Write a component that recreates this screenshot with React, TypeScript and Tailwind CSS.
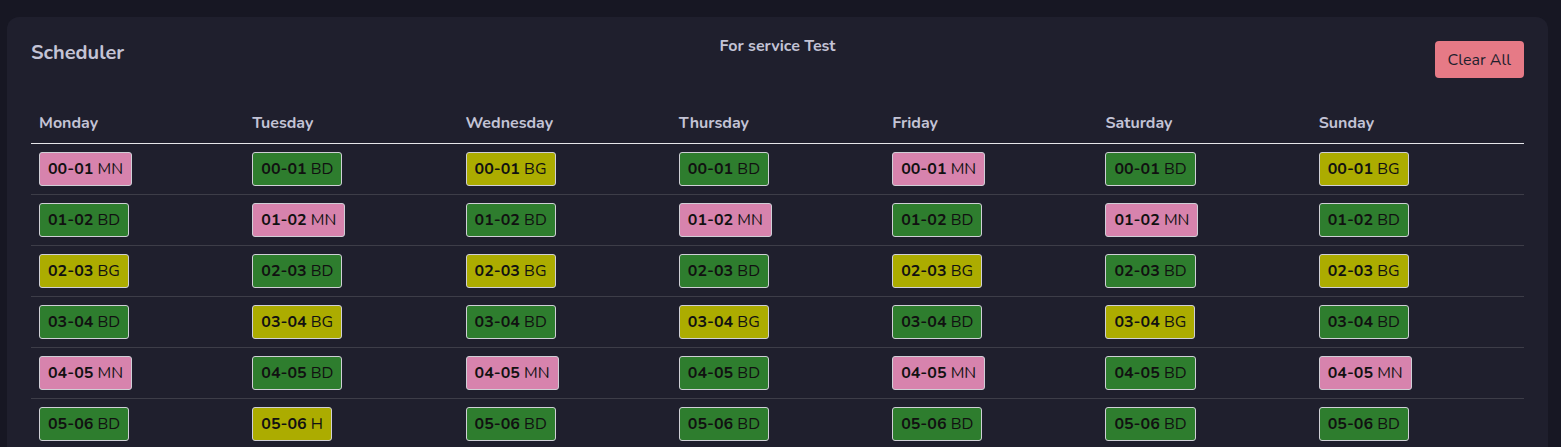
const days = ["Monday", "Tuesday", "Wednesday", "Thursday", "Friday", "Saturday", "Sunday"];

// one row per hour slot, one code per day
const slots: string[][] = [
  ["MN", "BD", "BG", "BD", "MN", "BD", "BG"],
  ["BD", "MN", "BD", "MN", "BD", "MN", "BD"],
  ["BG", "BD", "BG", "BD", "BG", "BD", "BG"],
  ["BD", "BG", "BD", "BG", "BD", "BG", "BD"],
  ["MN", "BD", "MN", "BD", "MN", "BD", "MN"],
  ["BD", "H", "BD", "BD", "BD", "BD", "BD"],
];

const chipColor: Record<string, string> = {
  MN: "bg-[#d783ad]",
  BD: "bg-[#2e7d2e]",
  BG: "bg-[#acac00]",
  H: "bg-[#acac00]",
};

const pad = (n: number) => String(n).padStart(2, "0");

function Chip({ hour, code }: { hour: number; code: string }) {
  return (
    <span
      className={`inline-block rounded-[3px] border border-[#cfcfd6] px-2 py-1 text-[16px] leading-6 text-[#111] ${chipColor[code]}`}
    >
      <span className="font-bold">
        {pad(hour)}-{pad(hour + 1)}
      </span>{" "}
      {code}
    </span>
  );
}

export default function App() {
  return (
    <div
      className="min-h-screen bg-[#171723] pt-[17px] pl-[7px] pr-[13px]"
      style={{ fontFamily: "Nunito, Lato, 'Noto Sans', sans-serif" }}
    >
      <div className="rounded-t-[12px] bg-[#1f1f2d] px-6 pt-6 pb-6">
        {/* Header */}
        <div className="flex items-start">
          <div className="flex-1">
            <h1 className="-mt-[2px] text-[20px] font-bold leading-7 text-[#c3c3d5]">Scheduler</h1>
          </div>
          <div className="-mt-[7px] text-[16px] font-bold leading-6 text-[#c3c3d5]">For service Test</div>
          <div className="flex flex-1 justify-end">
            <button className="h-[37px] rounded-[4px] bg-[#e67a86] px-[13px] text-[16px] text-[#1f1f2d]">
              Clear All
            </button>
          </div>
        </div>

        {/* Table */}
        <table className="mt-[21px] w-full table-fixed border-collapse">
          <thead>
            <tr className="border-b border-[#e6e6ea]">
              {days.map((d) => (
                <th
                  key={d}
                  className="px-2 pt-3 pb-2 text-left text-[16px] font-bold leading-6 text-[#c3c3d5]"
                >
                  {d}
                </th>
              ))}
            </tr>
          </thead>
          <tbody>
            {slots.map((row, h) => (
              <tr key={h} className="border-b border-[#3d3d48]">
                {row.map((code, i) => (
                  <td key={i} className="px-2 py-2">
                    <Chip hour={h} code={code} />
                  </td>
                ))}
              </tr>
            ))}
          </tbody>
        </table>
      </div>
    </div>
  );
}
